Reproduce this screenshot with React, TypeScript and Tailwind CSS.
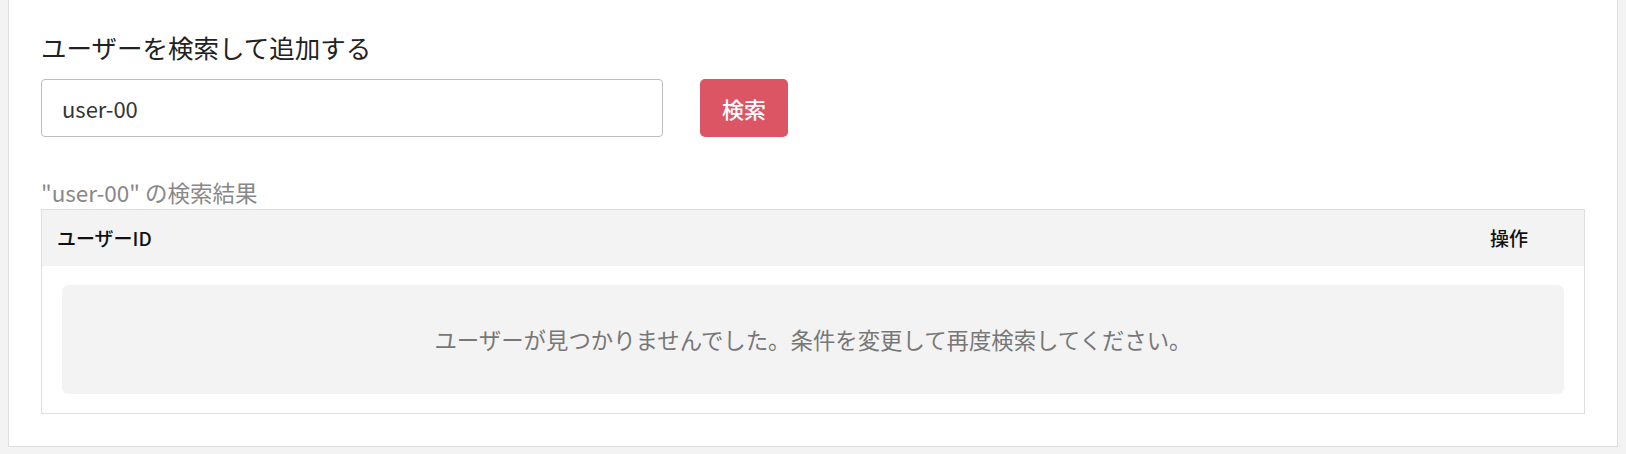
import React from 'react';

const FONT = { fontFamily: '"Noto Sans CJK JP", "Noto Sans", sans-serif' };

export default function App() {
  const query = 'user-00';

  return (
    <div className="min-h-screen bg-[#f3f3f3] px-[8px] pb-[7px]" style={FONT}>
      <div className="border-x border-b border-[#dedede] bg-white px-[32px] pt-[31px] pb-[32px]">
        <h2 className="text-[25.5px] leading-[32px] text-[#222]">ユーザーを検索して追加する</h2>

        {/* Search form */}
        <div className="mt-[16px] flex items-center gap-[37px]">
          <input
            className="h-[58px] w-[622px] rounded-[4px] border border-[#bdbdbd] px-[20px] text-[22px] text-[#333] outline-none"
            value={query}
            readOnly
          />
          <button className="h-[58px] w-[88px] rounded-[5px] bg-[#dc5564] text-[22px] font-medium text-white">
            検索
          </button>
        </div>

        <p className="mt-[41px] text-[22.5px] leading-[28px] text-[#888]">"{query}" の検索結果</p>

        {/* Results table */}
        <div className="mt-[3px] border border-[#dedede]">
          <div className="flex h-[56px] items-center justify-between bg-[#f3f3f3] pl-[15px] pr-[56px] text-[19px] font-medium text-[#111]">
            <span>ユーザーID</span>
            <span>操作</span>
          </div>
          <div className="px-[20px] pt-[19px] pb-[19px]">
            <div className="flex h-[109px] items-center justify-center rounded-[6px] bg-[#f3f3f3] text-[22.4px] text-[#777]">
              ユーザーが見つかりませんでした。条件を変更して再度検索してください。
            </div>
          </div>
        </div>
      </div>
    </div>
  );
}
